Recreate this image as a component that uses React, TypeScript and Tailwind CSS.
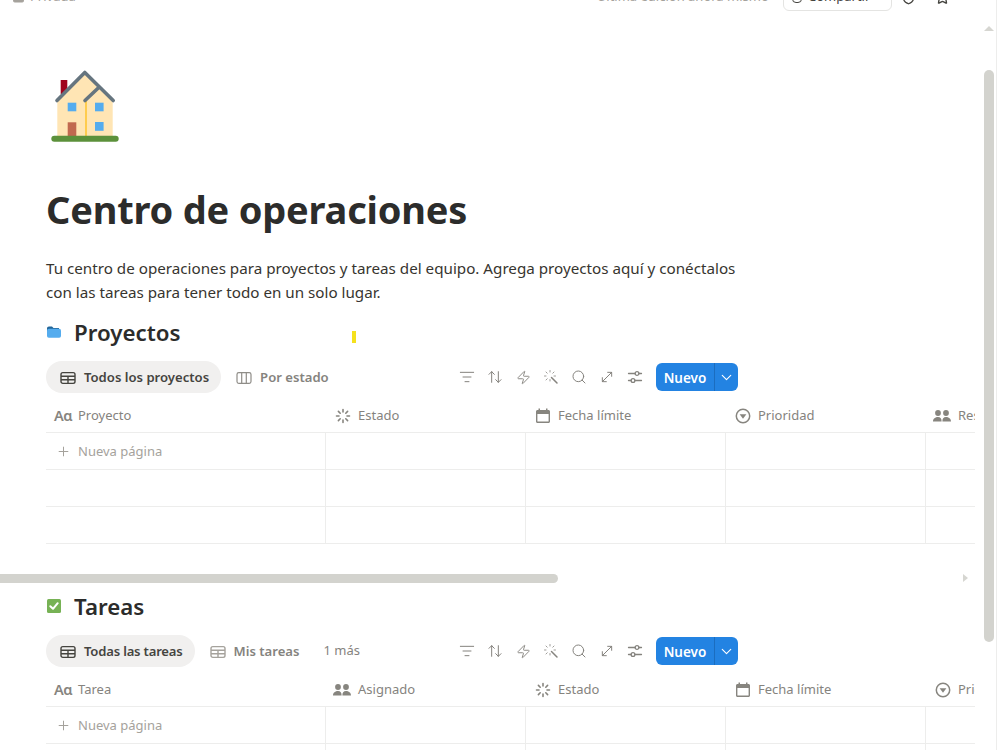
import { ChevronDown, Plus, Search, Zap, MoveDiagonal, ArrowUpDown, Star, Shield, Lock, ListFilter } from "lucide-react";

const HouseIcon = () => (
  <svg width="90" height="90" viewBox="40 60 90 90" className="block">
    <rect x="60.7" y="80" width="6.6" height="14" fill="#A0041E" />
    <path d="M57.3 136V100L84.5 73L112.7 100V136Z" fill="#FFE5B4" />
    <rect x="85" y="101" width="2" height="35" fill="#FFCC4D" />
    <rect x="67.7" y="102.7" width="8.6" height="8.6" fill="#55ACEE" />
    <rect x="95" y="102.7" width="8.6" height="8.6" fill="#55ACEE" />
    <rect x="95" y="122" width="8.6" height="8.8" fill="#55ACEE" />
    <rect x="67.7" y="122.3" width="8.6" height="13.7" fill="#C1694F" />
    <path d="M57 100.5L84.8 72.5L113.2 100.5M85 100.5L99.3 87" fill="none" stroke="#66757F" strokeWidth="3.6" strokeLinecap="round" strokeLinejoin="round" />
    <rect x="51.3" y="135.7" width="67.4" height="6" rx="3" fill="#5C913B" />
  </svg>
);

const FolderIcon = () => (
  <svg width="16" height="16" viewBox="0 0 16 16">
    <path d="M1 4.5C1 3.2 1.8 2.5 3 2.5H6L7.5 4H13V9H1Z" fill="#226699" />
    <rect x="1" y="4.8" width="14" height="9" rx="1.8" fill="#55ACEE" />
  </svg>
);

const CheckIcon = () => (
  <svg width="16" height="16" viewBox="0 0 16 16">
    <rect x="1" y="1" width="14" height="14" rx="1.5" fill="#77B255" />
    <path d="M4.3 8.2L7 10.8L11.7 5.2" fill="none" stroke="#fff" strokeWidth="2" strokeLinecap="round" strokeLinejoin="round" />
  </svg>
);

const TableIcon = (props: { color: string }) => (
  <svg width="16" height="16" viewBox="0 0 16 16" fill="none" stroke={props.color} strokeWidth="1.4">
    <rect x="1" y="2.6" width="14" height="10.8" rx="1.8" />
    <path d="M1 6.2H15M1 9.8H15M8 6.2V13.4" />
  </svg>
);

const BoardIcon = () => (
  <svg width="16" height="16" viewBox="0 0 16 16" fill="none" stroke="#8f8d88" strokeWidth="1.2">
    <rect x="1" y="2.6" width="14" height="10.8" rx="1.8" />
    <path d="M5.7 2.6V13.4M10.3 2.6V13.4" />
  </svg>
);

const StatusIcon = () => (
  <svg width="16" height="16" viewBox="0 0 16 16" stroke="#87857f" strokeWidth="1.6" strokeLinecap="round">
    <path d="M8 1.5V4M8 12V14.5M1.5 8H4M12 8H14.5M3.4 3.4L5.2 5.2M10.8 10.8L12.6 12.6M12.6 3.4L10.8 5.2M5.2 10.8L3.4 12.6" />
  </svg>
);

const CalendarIcon = () => (
  <svg width="16" height="16" viewBox="0 0 16 16" fill="#87857f">
    <path d="M1 3.5C1 2.7 1.7 2 2.5 2H3.5V0.6H5V2H11V0.6H12.5V2H13.5C14.3 2 15 2.7 15 3.5V13.5C15 14.3 14.3 15 13.5 15H2.5C1.7 15 1 14.3 1 13.5ZM2.4 6V13.6H13.6V6Z" fillRule="evenodd" />
  </svg>
);

const SelectIcon = () => (
  <svg width="16" height="16" viewBox="0 0 16 16">
    <circle cx="8" cy="8" r="6.7" fill="none" stroke="#87857f" strokeWidth="1.5" />
    <path d="M4.6 6.2H11.4L8 10.8Z" fill="#87857f" />
  </svg>
);

const PeopleIcon = () => (
  <svg width="18" height="16" viewBox="0 0 18 16" fill="#87857f" className="ml-[-2px]">
    <circle cx="5" cy="5" r="2.9" />
    <circle cx="13" cy="5" r="2.9" />
    <path d="M0 13.5C0 10.6 2.4 9 5 9C7.6 9 8.6 10.6 8.6 13.5ZM9.4 13.5C9.4 10.6 10.4 9 13 9C15.6 9 18 10.6 18 13.5Z" />
  </svg>
);

const WandIcon = () => (
  <svg width="16" height="16" viewBox="0 0 16 16" fill="none" stroke="currentColor" strokeLinecap="round">
    <path d="M8.5 8.5L14 14" strokeWidth="1.5" />
    <path d="M7 1.5V3M7 10.5V12M1.5 7H3M11 7H12.5M3 3L4.2 4.2M11 3L9.8 4.2M3 11L4.2 9.8" strokeWidth="1" opacity="0.8" />
  </svg>
);

const SlidersIcon = () => (
  <svg width="16" height="16" viewBox="0 0 16 16" fill="none" stroke="currentColor" strokeWidth="1.3" strokeLinecap="round">
    <path d="M1.5 4.5H8M12 4.5H14.5M1.5 11.5H4M8 11.5H14.5" />
    <circle cx="10" cy="4.5" r="1.9" />
    <circle cx="6" cy="11.5" r="1.9" />
  </svg>
);

const TitleIcon = () => (
  <span className="w-[18px] text-[14.5px] font-semibold leading-none text-[#87857f] tracking-[-0.5px]">Aɑ</span>
);

const toolbarIcons = [
  <ListFilter size={16} strokeWidth={1.5} />,
  <ArrowUpDown size={16} strokeWidth={1.5} />,
  <Zap size={15} strokeWidth={1.5} />,
  <WandIcon />,
  <Search size={16} strokeWidth={1.5} />,
  <MoveDiagonal size={16} strokeWidth={1.5} />,
  <SlidersIcon />,
];

const Tab = (props: { icon: React.ReactNode; label: string; active?: boolean; className?: string }) => (
  <div
    className={`flex items-center gap-2 h-8 pl-[14px] pr-3 pt-px rounded-full text-[13.1px] font-semibold whitespace-nowrap ${
      props.active ? "bg-[#f1f0ef] text-[#45443f]" : "text-[#85837e]"
    } ${props.className ?? ""}`}
  >
    {props.icon}
    {props.label}
  </div>
);

const Toolbar = () => (
  <div className="flex items-center text-[#85837e]">
    <div className="flex items-center gap-3">
      {toolbarIcons.map((icon, i) => (
        <span key={i} className="w-4 h-4 flex items-center justify-center">
          {icon}
        </span>
      ))}
    </div>
    <div className="ml-[13px] flex items-center h-7 w-[82px] rounded-md bg-[#2383e2] text-white text-[13.5px] font-semibold">
      <span className="w-[58px] pt-[2px] text-center">Nuevo</span>
      <span className="flex-1 h-full flex items-center justify-center border-l border-[#1b6dbf]">
        <ChevronDown size={17} strokeWidth={1.6} />
      </span>
    </div>
  </div>
);

type Column = { icon: React.ReactNode; label: string };

const Table = (props: { columns: Column[]; rows: number }) => {
  const widths = ["w-[280px]", "w-[200px]", "w-[200px]", "w-[200px]", "w-[200px]"];
  return (
    <div className="mt-1 w-[929px] overflow-hidden">
      <div className="flex h-9 w-[1080px] border-b border-[#ededec]">
        {props.columns.map((c, i) => (
          <div key={c.label} className={`${widths[i]} shrink-0 flex items-center gap-[6px] pl-2 pt-[2px] text-[13px] text-[#85837e]`}>
            <span className="w-[18px] flex justify-center">{c.icon}</span>
            {c.label}
          </div>
        ))}
      </div>
      {Array.from({ length: props.rows }).map((_, r) => (
        <div key={r} className="flex h-[37px] w-[1080px] border-b border-[#ededec]">
          {widths.map((w, i) => (
            <div key={i} className={`${w} shrink-0 border-r border-[#ededec] flex items-center gap-[6px] pl-2 pt-px text-[13px] text-[#a5a29c]`}>
              {r === 0 && i === 0 && (
                <>
                  <span className="w-[18px] flex justify-center">
                    <Plus size={15} strokeWidth={1.6} />
                  </span>
                  Nueva página
                </>
              )}
            </div>
          ))}
        </div>
      ))}
    </div>
  );
};

const Heading = (props: { icon: React.ReactNode; title: string; mt: string }) => (
  <div className={`flex items-center h-9 ${props.mt}`}>
    <span className="w-7 flex">{props.icon}</span>
    <h2 className="text-[22.3px] font-semibold text-[#2c2c2b] pt-[2px]">{props.title}</h2>
  </div>
);

export default function App() {
  return (
    <div className="relative w-[1000px] h-[750px] overflow-hidden bg-white font-['Noto_Sans','Open_Sans',sans-serif]">
      <div className="flex items-end h-[10px] text-[13px] text-[#a5a29c] pl-[12px]">
        <div className="flex items-center gap-[5px] mb-[4px]">
          <Lock size={13} fill="#a5a29c" />
          Privada
        </div>
        <div className="ml-[521px] mb-[4px] whitespace-nowrap">Última edición ahora mismo</div>
        <div className="absolute left-[783px] top-[-18px] w-[109px] h-[29px] rounded-md border border-[#e4e4e2] flex items-center gap-[6px] pl-2 text-[#45443f]">
          <span className="w-[10px] h-[13px] border border-[#45443f] rounded-sm" />
          Compartir
        </div>
        <div className="absolute left-[901px] top-[-10px] text-[#45443f]">
          <Shield size={15} />
        </div>
        <div className="absolute left-[935px] top-[-10px] text-[#45443f]">
          <Star size={15} strokeWidth={2.2} />
        </div>
      </div>

      <div className="pl-[46px]">
        <div className="ml-[-6px] mt-[50px]">
          <HouseIcon />
        </div>
        <h1 className="mt-[35px] h-12 text-[38px] leading-[48px] tracking-[-0.2px] font-bold text-[#2c2c2b]">Centro de operaciones</h1>
        <p className="mt-[23px] w-[708px] text-[15.2px] leading-6 text-[#37352f]">
          Tu centro de operaciones para proyectos y tareas del equipo. Agrega proyectos aquí y conéctalos con las tareas para tener todo en un solo lugar.
        </p>

        <Heading icon={<FolderIcon />} title="Proyectos" mt="mt-[10px]" />
        <div className="mt-[11px] flex items-center justify-between w-[692px]">
          <div className="flex items-center gap-px">
            <Tab icon={<TableIcon color="#45443f" />} label="Todos los proyectos" active />
            <Tab icon={<BoardIcon />} label="Por estado" />
          </div>
          <Toolbar />
        </div>
        <Table
          rows={3}
          columns={[
            { icon: <TitleIcon />, label: "Proyecto" },
            { icon: <StatusIcon />, label: "Estado" },
            { icon: <CalendarIcon />, label: "Fecha límite" },
            { icon: <SelectIcon />, label: "Prioridad" },
            { icon: <PeopleIcon />, label: "Responsable" },
          ]}
        />

        <Heading icon={<CheckIcon />} title="Tareas" mt="mt-[44px]" />
        <div className="mt-[11px] flex items-center justify-between w-[692px]">
          <div className="flex items-center gap-px">
            <Tab icon={<TableIcon color="#45443f" />} label="Todas las tareas" active className="tracking-[-0.2px]" />
            <Tab icon={<TableIcon color="#a5a29c" />} label="Mis tareas" />
            <span className="ml-[11px] text-[13px] text-[#85837e]">1 más</span>
          </div>
          <Toolbar />
        </div>
        <Table
          rows={2}
          columns={[
            { icon: <TitleIcon />, label: "Tarea" },
            { icon: <PeopleIcon />, label: "Asignado" },
            { icon: <StatusIcon />, label: "Estado" },
            { icon: <CalendarIcon />, label: "Fecha límite" },
            { icon: <SelectIcon />, label: "Prioridad" },
          ]}
        />
      </div>

      {/* overlays: scrollbars and the yellow cursor mark */}
      <div className="absolute left-[352px] top-[331px] w-1 h-3 bg-[#f5e11d]" />
      <div className="absolute left-0 top-[574px] w-[558px] h-[9px] rounded-r-full bg-[#d3d3ce]" />
      <div className="absolute left-[963px] top-[574px] w-0 h-0 border-y-[4.5px] border-y-transparent border-l-[5px] border-l-[#d6d6d1]" />
      <div className="absolute left-[984px] top-[26px] w-0 h-0 border-x-[5px] border-x-transparent border-b-[5px] border-b-[#d6d6d1]" />
      <div className="absolute left-[984px] top-[70px] w-[10px] h-[572px] rounded-full bg-[#d3d3ce]" />
      <div className="absolute left-[996px] top-0 w-px h-full bg-[#ededec]" />
    </div>
  );
}
